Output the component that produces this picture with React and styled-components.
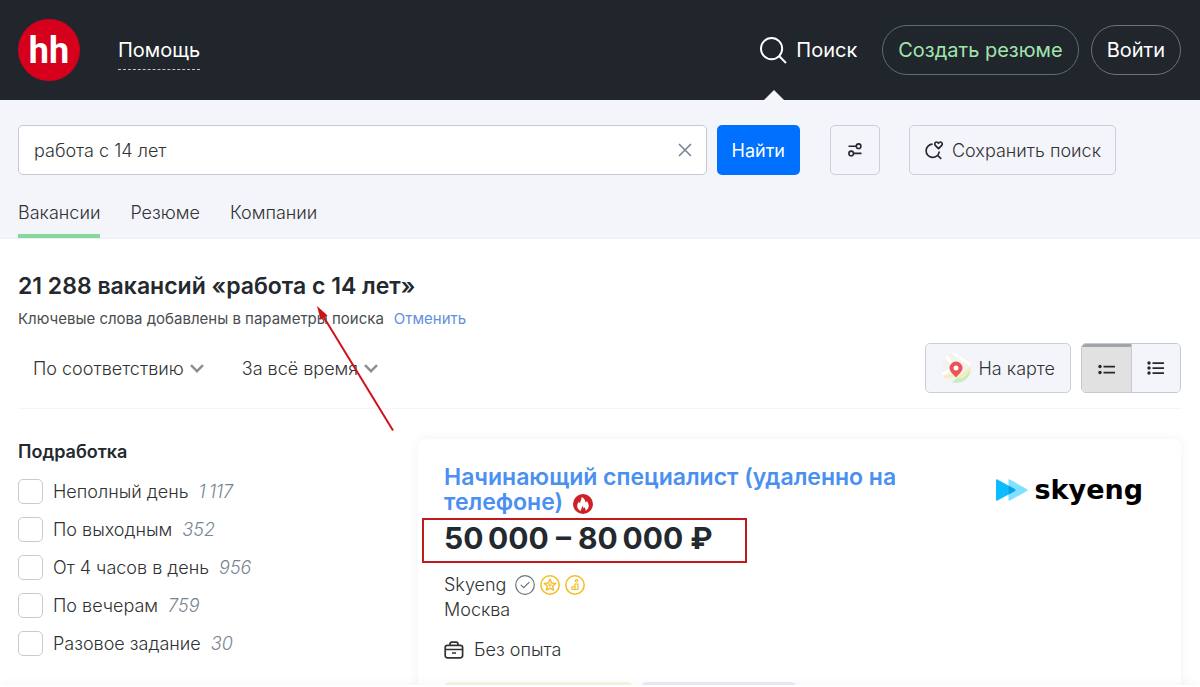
import { useState } from "react";
import styled, { createGlobalStyle } from "styled-components";

const GlobalStyle = createGlobalStyle`
  * {
    box-sizing: border-box;
  }

  body {
    margin: 0;
    background: #ffffff;
    color: #303233;
    font-family: Inter, "Liberation Sans", sans-serif;
    font-size: 18px;
    font-weight: 300;
    line-height: 25px;
  }

  button,
  input,
  select {
    margin: 0;
    color: inherit;
    font: inherit;
  }

  button {
    cursor: pointer;
  }
`;

const Page = styled.div`
  display: flex;
  flex-direction: column;
  height: 100vh;
`;

const Scroll = styled.div`
  flex: 1;
  min-height: 0;
  overflow-y: auto;
  scrollbar-width: none;
`;

const BottomBar = styled.div`
  position: relative;
  height: 2px;
  background: #ffffff;
  box-shadow: 0 0 8px #0000001f;
`;

const Header = styled.header`
  display: flex;
  align-items: center;
  height: 100px;
  padding: 0 19px 0 18px;
  background: #21262c;
  color: #ffffff;
  font-size: 20px;
  font-weight: 400;
`;

const Logo = styled.a`
  display: flex;
  align-items: center;
  justify-content: center;
  width: 62px;
  height: 62px;
  padding-top: 3px;
  margin-right: 38px;
  border-radius: 50%;
  background: #d6001c;
  color: #ffffff;
  font-family: Roboto, sans-serif;
  font-size: 36px;
  font-weight: 700;
  text-decoration: none;
`;

const HelpLink = styled.a`
  margin-top: 1px;
  padding: 6px 0;
  border-bottom: 1px dashed #c4c7ca;
  color: #ffffff;
  text-decoration: none;
`;

const Actions = styled.div`
  display: flex;
  align-items: center;
  align-self: stretch;
  margin-left: auto;
`;

const SearchLink = styled.a`
  position: relative;
  display: flex;
  align-items: center;
  align-self: stretch;
  gap: 9px;
  margin-right: 25px;
  color: #ffffff;
  text-decoration: none;

  &::after {
    content: "";
    position: absolute;
    bottom: 0;
    left: 4px;
    border: 10px solid transparent;
    border-top: 0;
    border-bottom-color: #f4f5fb;
  }
`;

const PillButton = styled.button`
  height: 50px;
  margin-left: ${(props) => (props.$spaced ? "12px" : "0")};
  padding: 0 15px;
  border: 1px solid ${(props) => (props.$green ? "#5c7069" : "#6d737a")};
  border-radius: 25px;
  background: transparent;
  color: ${(props) => (props.$green ? "#a0e5ae" : "#ffffff")};
`;

const SearchArea = styled.div`
  padding: 25px 18px 0;
  border-bottom: 1px solid #eff0f6;
  background: #f4f5fb;
`;

const SearchRow = styled.div`
  display: flex;
  padding-right: 66px;
`;

const SearchForm = styled.form`
  display: flex;
  flex: 1;
  gap: 10px;
  margin-right: 30px;
`;

const Field = styled.div`
  display: flex;
  align-items: center;
  flex: 1;
  height: 50px;
  padding-right: 12px;
  border: 1px solid #c3c9d2;
  border-radius: 5px;
  background: #ffffff;
`;

const SearchInput = styled.input`
  flex: 1;
  min-width: 0;
  height: 48px;
  padding: 0 15px;
  border: 0;
  outline: 0;
  background: transparent;
`;

const ClearButton = styled.button`
  display: flex;
  padding: 0;
  border: 0;
  background: transparent;
  color: #768694;
`;

const SubmitButton = styled.button`
  height: 50px;
  padding: 0 15px;
  border: 0;
  border-radius: 5px;
  background: #0070ff;
  color: #ffffff;
  font-weight: 400;
`;

const BoxButton = styled.button`
  display: flex;
  align-items: center;
  justify-content: center;
  gap: 8px;
  min-width: 50px;
  height: 50px;
  padding: 0 ${(props) => (props.$icon ? "0" : props.$wide ? "15px" : "14px")};
  margin-right: ${(props) => (props.$icon ? "29px" : "0")};
  border: 1px solid #cbcfd8;
  border-radius: 5px;
  background: #f4f5fb;
`;

const Tabs = styled.nav`
  display: flex;
  gap: 30px;
  margin-top: 25px;
`;

const Tab = styled.a`
  padding-bottom: 9px;
  border-bottom: 4px solid ${(props) => (props.$active ? "#87d69b" : "transparent")};
  color: inherit;
  text-decoration: none;
`;

const Results = styled.main`
  position: relative;
  padding: 32px 19px 0 18px;
`;

const Title = styled.h1`
  margin: 0;
  color: #23292e;
  font-size: 23px;
  font-weight: 600;
  line-height: 30px;
`;

const Note = styled.p`
  margin: 8px 0 0;
  font-size: 15px;
  font-weight: 400;
  line-height: 20px;
  color: #4a4d50;
`;

const CancelLink = styled.a`
  margin-left: 10px;
  color: #5f90dd;
  text-decoration: none;
`;

const Toolbar = styled.div`
  display: flex;
  align-items: center;
  padding: 14px 0 15px;
  border-bottom: 1px solid #f5f5f7;
`;

const SelectBox = styled.div`
  display: flex;
  align-items: center;
  margin-left: 15px;
  margin-right: 23px;
  color: #8b8f94;
`;

const Select = styled.select`
  appearance: none;
  field-sizing: content;
  margin-right: -20px;
  padding: 0 26px 0 0;
  border: 0;
  background: transparent;
  color: #303233;

  & + svg {
    pointer-events: none;
  }
`;

const ViewTools = styled.div`
  display: flex;
  gap: 10px;
  margin-left: auto;
`;

const ViewSwitch = styled.div`
  display: flex;
  overflow: hidden;
  border: 1px solid #c3c9d2;
  border-radius: 5px;
`;

const ViewButton = styled.button`
  display: flex;
  align-items: center;
  justify-content: center;
  width: 49px;
  height: 48px;
  padding: 0;
  border: 0;
  border-left: ${(props) => (props.$active ? "0" : "1px solid #c3c9d2")};
  background: ${(props) => (props.$active ? "#e1e1e1" : "#f4f5fb")};
  box-shadow: ${(props) => (props.$active ? "inset 0 3px #a1a4a6" : "none")};
`;

const Columns = styled.div`
  display: grid;
  grid-template-columns: 350px 1fr;
  gap: 50px;
  padding-top: 30px;
`;

const Filters = styled.fieldset`
  min-width: 0;
  margin: 0;
  padding: 0;
  border: 0;
`;

const FiltersTitle = styled.legend`
  padding: 0;
  margin-bottom: 15px;
  color: #23292e;
  font-weight: 600;
`;

const FilterRow = styled.label`
  display: flex;
  align-items: center;
  height: 25px;
  margin-bottom: 13px;
`;

const Checkbox = styled.input`
  appearance: none;
  width: 25px;
  height: 25px;
  margin: 0 10px 0 0;
  border: 1px solid #c8cccf;
  border-radius: 5px;
  background: #ffffff;

  &:checked {
    background: #0070ff;
  }
`;

const Count = styled.span`
  margin-left: 10px;
  color: #768694;
  font-style: italic;
`;

const Card = styled.article`
  display: flex;
  justify-content: space-between;
  padding: 26px 38px 26px 26px;
  border-radius: 8px;
  box-shadow: 0 0 12px #5c6a8c14;
`;

const CardBody = styled.div`
  width: 460px;
`;

const VacancyTitle = styled.h2`
  margin: 0;
  font-size: 23px;
  font-weight: 600;
  line-height: 25px;

  a {
    color: #4a90f0;
    text-decoration: none;
  }

  svg {
    margin-left: 4px;
    vertical-align: -4px;
  }
`;

const Salary = styled.div`
  position: relative;
  width: max-content;
  margin: 3px 0 14px;
  color: #23292e;
  font-size: 30px;
  font-weight: 700;
  line-height: 40px;
`;

const Highlight = styled.div`
  position: absolute;
  top: 0;
  left: -22px;
  width: 325px;
  height: 45px;
  border: 2px solid #c01a1e;
`;

const Company = styled.div`
  display: flex;
  align-items: center;
`;

const Badges = styled.span`
  display: flex;
  gap: 5px;
  margin-left: 9px;
`;

const Experience = styled.div`
  display: flex;
  align-items: center;
  gap: 10px;
  margin-top: 15px;
`;

const Tags = styled.div`
  display: flex;
  gap: 8px;
  margin-top: 20px;
`;

const Tag = styled.span`
  width: ${(props) => props.$width}px;
  height: 30px;
  border-radius: 6px;
  background: ${(props) => props.$color};
`;

const Brand = styled.div`
  display: flex;
  align-items: center;
  align-self: flex-start;
  gap: 7px;
  margin-top: 12px;
  color: #000000;
  font-family: "DejaVu Sans", sans-serif;
  font-size: 27px;
  font-weight: 700;
`;

const Arrow = styled.svg`
  position: absolute;
  top: 64px;
  left: 314px;
  pointer-events: none;
`;

const FILTERS = [
  { label: "Неполный день", count: "1\u2009117" },
  { label: "По выходным", count: "352" },
  { label: "От 4 часов в день", count: "956" },
  { label: "По вечерам", count: "759" },
  { label: "Разовое задание", count: "30" },
];

const SearchIcon = () => (
  <svg width="27" height="27" viewBox="0 0 28 28" fill="none" stroke="#fff" strokeWidth="2">
    <circle cx="12" cy="12" r="11" />
    <path d="M19.5 19.5L27 27" />
  </svg>
);

const SlidersIcon = () => (
  <svg width="14" height="14" viewBox="0 0 14 14" fill="none" stroke="#23292e" strokeWidth="1.6">
    <circle cx="10.6" cy="3.2" r="2.3" />
    <circle cx="3.2" cy="10.4" r="2.3" />
    <path d="M0.5 3.2H8.3M5.5 10.4H13.5" />
  </svg>
);

const SaveSearchIcon = () => (
  <svg width="20" height="20" viewBox="0 0 20 20" fill="none" stroke="#23292e" strokeWidth="1.7">
    <path d="M8.6 4.2A6.6 6.600 0 1 0 15.3 11.500M13.200 15L17.200 18.800" />
    <path
      d="M14.500 8.700L11.500 5.700C9.900 4.100 11 2 12.500 2c1 0 1.600.6 2 1.300.4-.7 1-1.300 2-1.300 1.500 0 2.600 2.100 1 3.700z"
      strokeLinejoin="round"
    />
  </svg>
);

const Chevron = () => (
  <svg width="14" height="9" viewBox="0 0 14 9" fill="none" stroke="currentColor" strokeWidth="2.4">
    <path d="M1 1.2L7 7.2L13 1.2" />
  </svg>
);

const MapIcon = () => (
  <svg width="30" height="30" viewBox="0 0 30 30">
    <defs>
      <clipPath id="map">
        <circle cx="15" cy="15" r="15" />
      </clipPath>
    </defs>
    <g clipPath="url(#map)">
      <rect width="30" height="30" fill="#f3f2ee" />
      <path d="M30 14v16H10z" fill="#c6ecc0" />
      <path d="M3 0l10 14M12 0l18 12M0 22l14-8" stroke="#fff" strokeWidth="3" />
      <path d="M0 25l14-3 7 2 9-9" fill="none" stroke="#f9ecb8" strokeWidth="3" />
    </g>
    <path
      d="M15 8.5a6.5 6.5 0 0 1 6.5 6.6c0 3.4-3.2 5.6-6.5 9.4-3.3-3.8-6.5-6-6.5-9.4A6.5 6.5 0 0 1 15 8.5z"
      fill="#ea5455"
    />
    <circle cx="15" cy="15" r="2.5" fill="#fff" />
  </svg>
);

const ShortListIcon = () => (
  <svg width="18" height="14" viewBox="0 0 18 14" fill="#23292e">
    <circle cx="2" cy="5.5" r="1.7" />
    <circle cx="2" cy="11.5" r="1.7" />
    <path d="M5.5 4.7h11.5v1.7H5.5zM5.5 10.7h11.5v1.7H5.5z" />
  </svg>
);

const LongListIcon = () => (
  <svg width="18" height="14" viewBox="0 0 18 14" fill="#23292e">
    <circle cx="2" cy="2" r="1.7" />
    <circle cx="2" cy="7" r="1.7" />
    <circle cx="2" cy="12" r="1.7" />
    <path d="M5.5 1.2h11.5v1.7H5.5zM5.5 6.2h11.5v1.7H5.5zM5.5 11.2h11.5v1.7H5.5z" />
  </svg>
);

const FireIcon = () => (
  <svg width="20" height="20" viewBox="0 0 20 20">
    <circle cx="10" cy="10" r="10" fill="#ce2027" />
    <path
      d="M8.6 3c2.6 1.200 3.900 3.300 3.900 5.600.8-.3 1.100-.8 1.200-1.600 1.300 1.400 2 3 2 4.800 0 2.300-1.200 4-3.200 4.900.3-1.400-.2-2.600-1.200-3.500-.1.600-.3 1-.8 1.200 0-1.200-.3-2-.9-2.700-.4 1.900-2 3.100-1.500 5.200-2.400-.7-3.900-2.600-3.900-5 0-1.800.8-3.200 1.900-4.500.1.900.4 1.500 1 1.900C7.200 7 8.800 5.400 8.600 3z"
      fill="#fff"
    />
  </svg>
);

const CheckBadge = () => (
  <svg width="20" height="20" viewBox="0 0 20 20" fill="none" stroke="#68727d" strokeWidth="1.2">
    <circle cx="10" cy="10" r="9.3" />
    <path d="M5.8 9.8l2.9 2.9 5.6-5.6" />
  </svg>
);

const StarBadge = () => (
  <svg width="20" height="20" viewBox="0 0 20 20" fill="none" stroke="#f2bd24">
    <circle cx="10" cy="10" r="9.2" strokeWidth="1.5" />
    <path
      d="M10 4.3l1.7 3.7 4 .4-3 2.7.9 4-3.6-2-3.6 2 .9-4-3-2.7 4-.4z"
      strokeWidth="1.4"
      strokeLinejoin="round"
    />
    <circle cx="10" cy="10" r="1.2" />
  </svg>
);

const StepsBadge = () => (
  <svg width="20" height="20" viewBox="0 0 20 20" fill="none" stroke="#f2bd24">
    <circle cx="10" cy="10" r="9.2" strokeWidth="1.5" />
    <circle cx="11.5" cy="5.8" r="1.2" strokeWidth="1.2" />
    <path d="M7 14.5v-2.6h2.9v2.6M9.9 14.5V9h3v5.5zM6.5 14.5h6.5" strokeWidth="1.2" />
  </svg>
);

const CaseIcon = () => (
  <svg width="20" height="20" viewBox="0 0 20 20" fill="none" stroke="#303233" strokeWidth="1.7">
    <rect x="1.2" y="5.3" width="17.4" height="12.5" rx="2.2" />
    <path d="M6 5V4.2C6 3 6.8 2.2 8 2.2h4c1.2 0 2 .8 2 2V5M1.2 9.5h17.4M8 13h4" />
  </svg>
);

const SkyengMark = () => (
  <svg width="32" height="22" viewBox="0 0 32 22">
    <path d="M12.5 1.2v19.6q0 1.5 1.5.7L31 12q1-.9 0-1.8L14 .5q-1.5-.7-1.5.7z" fill="#7fe0ff" />
    <path d="M0 1.2v19.6q0 1.5 1.5.7L19 12q1-.9 0-1.8L1.5.5Q0-.2 0 1.2z" fill="#0cbcff" />
    <path d="M12.5 6.5v9L19 12q1-.9 0-1.8z" fill="#0a9fe8" />
  </svg>
);

function FilterItem({ label, count }) {
  return (
    <FilterRow>
      <Checkbox type="checkbox" />
      {label}
      <Count>{count}</Count>
    </FilterRow>
  );
}

function App() {
  const [query, setQuery] = useState("работа с 14 лет");
  const [view, setView] = useState("short");

  return (
    <Page>
      <GlobalStyle />
      <Scroll>
        <Header>
          <Logo href="#">hh</Logo>
          <HelpLink href="#">Помощь</HelpLink>
          <Actions>
            <SearchLink href="#">
              <SearchIcon />
              Поиск
            </SearchLink>
            <PillButton $green>Создать резюме</PillButton>
            <PillButton $spaced>Войти</PillButton>
          </Actions>
        </Header>

        <SearchArea>
          <SearchRow>
            <SearchForm onSubmit={(event) => event.preventDefault()}>
              <Field>
                <SearchInput
                  aria-label="Поиск"
                  value={query}
                  onChange={(event) => setQuery(event.target.value)}
                />
                <ClearButton type="button" aria-label="Очистить" onClick={() => setQuery("")}>
                  <svg width="18" height="18" viewBox="0 0 18 18" stroke="currentColor" strokeWidth="1.6">
                    <path d="M3 3l12 12M15 3L3 15" />
                  </svg>
                </ClearButton>
              </Field>
              <SubmitButton type="submit">Найти</SubmitButton>
            </SearchForm>
            <BoxButton $icon aria-label="Фильтры">
              <SlidersIcon />
            </BoxButton>
            <BoxButton>
              <SaveSearchIcon />
              Сохранить поиск
            </BoxButton>
          </SearchRow>
          <Tabs>
            <Tab href="#" $active>
              Вакансии
            </Tab>
            <Tab href="#">Резюме</Tab>
            <Tab href="#">Компании</Tab>
          </Tabs>
        </SearchArea>

        <Results>
          <Title>21 288 вакансий «работа с 14 лет»</Title>
          <Note>
            Ключевые слова добавлены в параметры поиска
            <CancelLink href="#">Отменить</CancelLink>
          </Note>

          <Toolbar>
            <SelectBox>
              <Select aria-label="Сортировка">
                <option>По соответствию</option>
              </Select>
              <Chevron />
            </SelectBox>
            <SelectBox>
              <Select aria-label="Период">
                <option>За всё время</option>
              </Select>
              <Chevron />
            </SelectBox>
            <ViewTools>
              <BoxButton $wide>
                <MapIcon />
                На карте
              </BoxButton>
              <ViewSwitch>
                <ViewButton $active={view === "short"} aria-label="Кратко" onClick={() => setView("short")}>
                  <ShortListIcon />
                </ViewButton>
                <ViewButton $active={view === "long"} aria-label="Подробно" onClick={() => setView("long")}>
                  <LongListIcon />
                </ViewButton>
              </ViewSwitch>
            </ViewTools>
          </Toolbar>

          <Columns>
            <Filters>
              <FiltersTitle>Подработка</FiltersTitle>
              {FILTERS.map((item) => (
                <FilterItem key={item.label} {...item} />
              ))}
            </Filters>

            <Card>
              <CardBody>
                <VacancyTitle>
                  <a href="#">Начинающий специалист (удаленно на телефоне)</a> <FireIcon />
                </VacancyTitle>
                <Salary>
                  {"50\u2009000 – 80\u2009000 ₽"}
                  <Highlight />
                </Salary>
                <Company>
                  Skyeng
                  <Badges>
                    <CheckBadge />
                    <StarBadge />
                    <StepsBadge />
                  </Badges>
                </Company>
                <div>Москва</div>
                <Experience>
                  <CaseIcon />
                  Без опыта
                </Experience>
                <Tags>
                  <Tag $width={189} $color="#f4f6e3" />
                  <Tag $width={156} $color="#ebe9fa" />
                </Tags>
              </CardBody>
              <Brand>
                <SkyengMark />
                skyeng
              </Brand>
            </Card>
          </Columns>

          <Arrow width="82" height="130" viewBox="0 0 82 130">
            <path d="M79 127.5L6 8" stroke="#cf1216" strokeWidth="2" />
            <path d="M3 3l10.500 9.500-7 4z" fill="#cf1216" />
          </Arrow>
        </Results>
      </Scroll>
      <BottomBar />
    </Page>
  );
}

export default App;
